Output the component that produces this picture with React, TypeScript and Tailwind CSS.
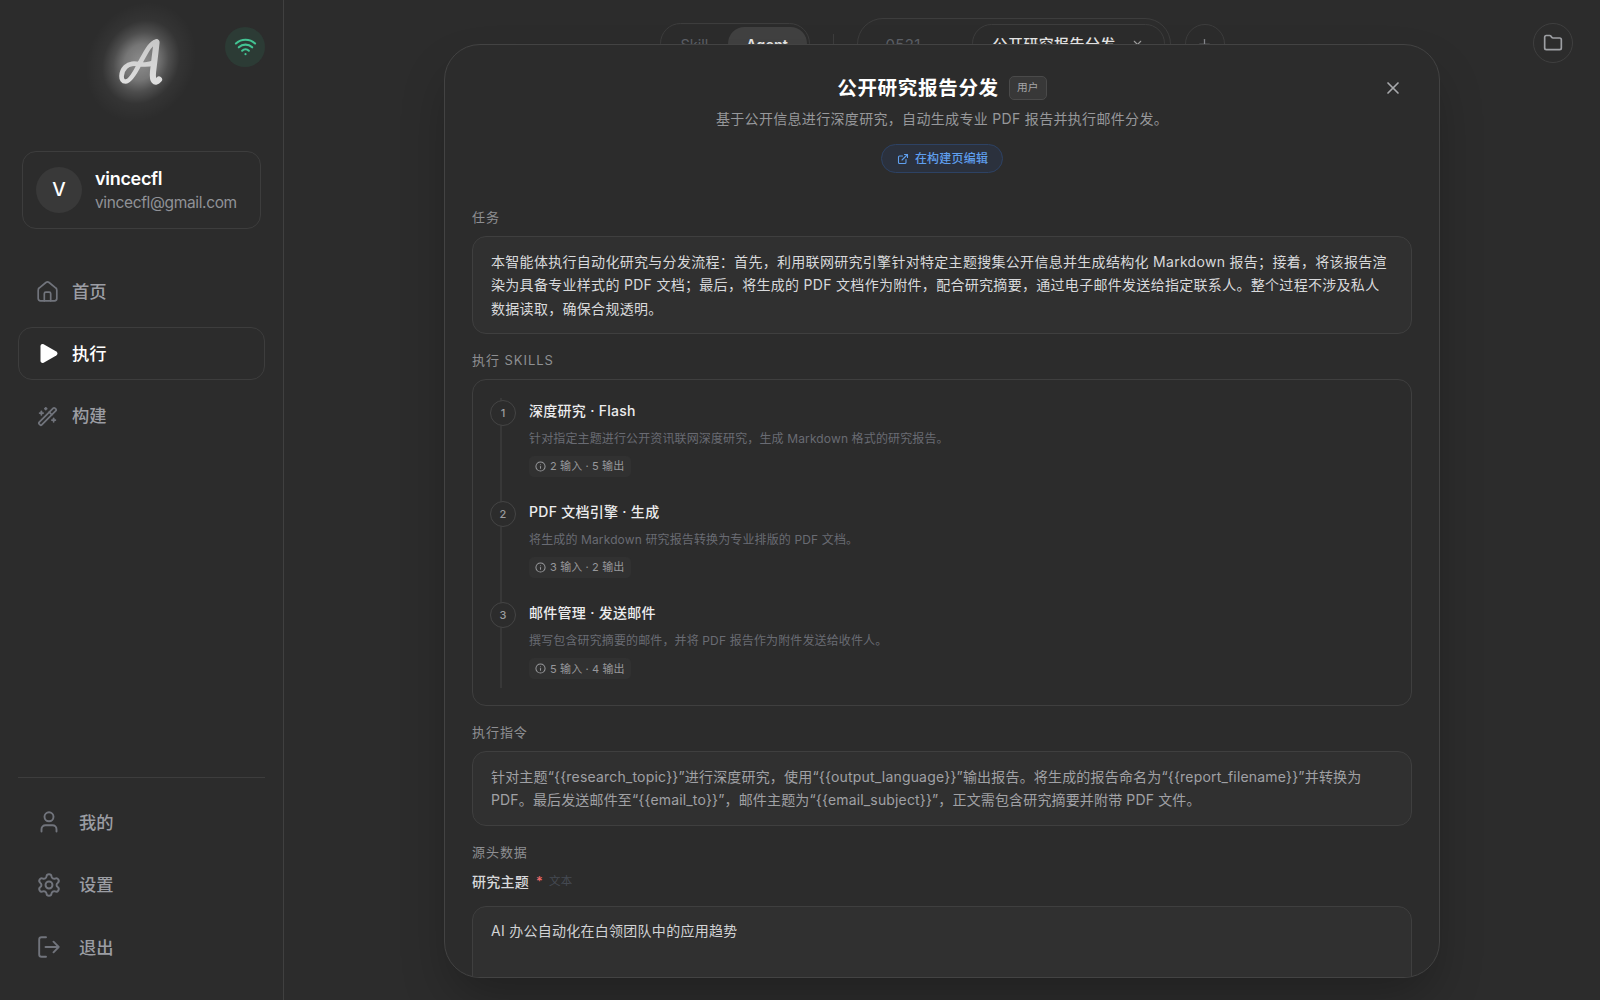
import type { ReactNode } from 'react'
import {
  ExternalLink,
  Folder,
  Info,
  Plus,
  WandSparkles,
  Wifi,
  X,
} from 'lucide-react'

const skills = [
  {
    title: '深度研究 · Flash',
    description: '针对指定主题进行公开资讯联网深度研究，生成 Markdown 格式的研究报告。',
    io: '2 输入 · 5 输出',
  },
  {
    title: 'PDF 文档引擎 · 生成',
    description: '将生成的 Markdown 研究报告转换为专业排版的 PDF 文档。',
    io: '3 输入 · 2 输出',
  },
  {
    title: '邮件管理 · 发送邮件',
    description: '撰写包含研究摘要的邮件，并将 PDF 报告作为附件发送给收件人。',
    io: '5 输入 · 4 输出',
  },
]

function Logo() {
  return (
    <svg
      viewBox="0 0 100 90"
      className="mr-1 h-[90px] w-[100px] overflow-visible"
      fill="none"
      strokeLinecap="round"
      strokeLinejoin="round"
    >
      <defs>
        <radialGradient id="glow">
          <stop offset="0" stopColor="#fff" stopOpacity="0.46" />
          <stop offset="0.3" stopColor="#fff" stopOpacity="0.35" />
          <stop offset="0.5" stopColor="#fff" stopOpacity="0.16" />
          <stop offset="0.7" stopColor="#fff" stopOpacity="0.04" />
          <stop offset="1" stopColor="#fff" stopOpacity="0" />
        </radialGradient>
        <linearGradient id="ink" x1="0" y1="0" x2="0" y2="1">
          <stop offset="0" stopColor="#c8c8c8" />
          <stop offset="1" stopColor="#dedede" />
        </linearGradient>
      </defs>
      <ellipse cx="51" cy="42" rx="53" ry="62" fill="url(#glow)" transform="rotate(30 51 42)" />
      <path
        d="M66.500 21.500C60 23 56 32 50 43C45 53 40 61.500 35.500 61.500C30 61.500 30.500 52 35.500 47C41 41.500 48 44.500 55 44.500C59 44.500 62 43.500 64.500 42.500"
        stroke="url(#ink)"
        strokeWidth="4.700"
      />
      <path
        d="M66.500 22.500C65.500 32 64 43 63 52C62.200 61 65 64 69 59.500"
        stroke="url(#ink)"
        strokeWidth="6.200"
      />
    </svg>
  )
}

function HomeIcon() {
  return (
    <svg viewBox="0 0 21 21" className="size-[21px]" fill="none" stroke="currentColor" strokeWidth="1.700" strokeLinecap="round" strokeLinejoin="round">
      <path d="M1.200 9.200C1.200 8.200 1.600 7.400 2.400 6.800L8.900 1.500C9.900.8 11.100.8 12.100 1.500L18.600 6.800C19.400 7.400 19.800 8.200 19.800 9.200V17.500C19.800 19 19 19.800 17.500 19.800H3.500C2 19.800 1.200 19 1.200 17.500Z" />
      <path d="M7.300 19.800V12.800C7.300 11.800 7.900 11.200 8.900 11.200H12.100C13.100 11.200 13.700 11.800 13.700 12.800V19.800" />
    </svg>
  )
}

function PlayIcon() {
  return (
    <svg viewBox="0 0 21 21" className="size-[21px]" fill="#fff">
      <path d="M2.500 3.200C2.500 1.400 4 .6 5.600 1.300L18.300 8.500C19.900 9.500 19.900 11.500 18.300 12.500L5.600 19.700C4 20.500 2.500 19.600 2.500 17.800Z" />
    </svg>
  )
}

function UserIcon() {
  return (
    <svg viewBox="0 0 22 22" className="-mt-0.5 size-[22px]" fill="none" stroke="currentColor" strokeWidth="1.900" strokeLinecap="round">
      <circle cx="11" cy="5.800" r="4.500" />
      <path d="M3.500 20.500V18.200C3.500 15.900 5.200 14.200 7.500 14.200H14.500C16.800 14.200 18.500 15.900 18.500 18.200V20.500" />
    </svg>
  )
}

function GearIcon() {
  return (
    <svg viewBox="0 0 24 24" className="size-[26px] shrink-0" fill="none" stroke="currentColor" strokeWidth="1.800" strokeLinejoin="round">
      <path d="M9.671 4.136a2.340 2.340 0 0 1 4.659 0 2.340 2.340 0 0 0 3.319 1.915 2.340 2.340 0 0 1 2.330 4.033 2.340 2.340 0 0 0 0 3.831 2.340 2.340 0 0 1-2.330 4.033 2.340 2.340 0 0 0-3.319 1.915 2.340 2.340 0 0 1-4.659 0 2.340 2.340 0 0 0-3.320-1.915 2.340 2.340 0 0 1-2.330-4.033 2.340 2.340 0 0 0 0-3.831A2.340 2.340 0 0 1 6.350 6.051a2.340 2.340 0 0 0 3.319-1.915" />
      <circle cx="12" cy="12" r="3.200" />
    </svg>
  )
}

function LogoutIcon() {
  return (
    <svg viewBox="0 0 22 22" className="-mt-0.5 size-[22px]" fill="none" stroke="currentColor" strokeWidth="1.900" strokeLinecap="round" strokeLinejoin="round">
      <path d="M8 1.200H3.500C2 1.200 1.200 2 1.200 3.500V18.500C1.200 20 2 20.800 3.500 20.800H8" />
      <path d="M7.500 11H20.700M15.500 5.700L20.700 11L15.500 16.300" />
    </svg>
  )
}

function NavItem({ icon, label, active }: { icon: ReactNode; label: string; active?: boolean }) {
  return (
    <a
      className={
        active
          ? 'flex h-[53px] items-center gap-[14px] rounded-[14px] border border-[#3d3d3d] pl-[18px] text-white'
          : 'flex h-[53px] items-center gap-[14px] rounded-[14px] border border-transparent pl-[18px] text-[#71747c]'
      }
    >
      {icon}
      <span className={active ? 'text-[17.300px] font-medium' : 'text-[17.300px] font-medium text-[#9b9da3]'}>{label}</span>
    </a>
  )
}

function FooterItem({ icon, label }: { icon: ReactNode; label: string }) {
  return (
    <a className="flex h-[53px] items-center gap-[19px] pl-[19px] text-[#71747c]">
      <span className="flex w-[23px] justify-center">{icon}</span>
      <span className="text-[17.300px] font-medium text-[#9b9da3]">{label}</span>
    </a>
  )
}

function Sidebar() {
  return (
    <aside className="flex h-full w-[284px] shrink-0 flex-col border-r border-[#404040] px-[18px]">
      <div className="relative flex h-[151px] justify-center pt-5">
        <Logo />
        <div className="absolute top-[27px] right-0 flex size-10 items-center justify-center rounded-full bg-[#2c3b35]">
          <Wifi className="-mt-0.5 size-[23px] text-[#43c493]" strokeWidth={2.2} />
        </div>
      </div>

      <div className="mx-1 flex h-[78px] items-center rounded-[14px] border border-[#3d3d3d] pl-[13px]">
        <div className="flex size-[46px] items-center justify-center rounded-full bg-[#393939] text-[19px] font-medium text-white">
          V
        </div>
        <div className="ml-[13px] pt-[2px] leading-6">
          <p className="text-[18px] font-semibold tracking-[-0.300px] text-white">vincecfl</p>
          <p className="text-[15.500px] tracking-[-0.360px] text-[#909297]">vincecfl@gmail.com</p>
        </div>
      </div>

      <nav className="mt-[36px] flex flex-col gap-[9.300px]">
        <NavItem icon={<HomeIcon />} label="首页" />
        <NavItem icon={<span className="w-[21px] pl-px"><PlayIcon /></span>} label="执行" active />
        <NavItem icon={<WandSparkles className="size-[21px]" strokeWidth={2} />} label="构建" />
      </nav>

      <div className="mt-auto mb-[26px] flex flex-col gap-[9.300px] border-t border-[#3d3d3d] pt-[18px]">
        <FooterItem icon={<UserIcon />} label="我的" />
        <FooterItem icon={<GearIcon />} label="设置" />
        <FooterItem icon={<LogoutIcon />} label="退出" />
      </div>
    </aside>
  )
}

function TopBar() {
  return (
    <header className="grid h-[87px] grid-cols-[1fr_auto_1fr] items-center">
      <div />
      <div className="flex items-center">
        <div className="flex h-[41px] w-[150px] items-center rounded-full border border-[#3d3d3d] pr-[2px] text-[14.500px]">
          <span className="flex-1 pt-0.5 pl-[20px] text-[#5d6067]">Skill</span>
          <span className="flex h-[33px] w-[79px] items-center justify-center rounded-full bg-[#414141] pt-0.5 font-semibold text-[#e6e6e6]">
            Agent
          </span>
        </div>
        <div className="mx-[23px] h-5 w-px bg-[#3d3d3d]" />
        <div className="flex h-[52px] w-[314px] items-center justify-between rounded-full border border-[#3d3d3d] pr-[5px] pl-7 text-[15px]">
          <span className="pt-1 tracking-[0.300px] text-[#5d6067]">0521</span>
          <span className="flex h-[39px] w-[193px] items-center justify-between rounded-full border border-[#3d3d3d] pr-[20px] pl-5 font-medium text-[#e6e6e6]">
            <span className="pt-[3px] tracking-[0.400px]">公开研究报告分发</span>
            <X className="mt-0.5 size-[13px] text-[#a0a0a0]" strokeWidth={2} />
          </span>
        </div>
        <div className="ml-[14px] flex size-[40px] items-center justify-center rounded-full border border-[#3d3d3d]">
          <Plus className="mt-0.5 size-[17px] text-[#85878c]" strokeWidth={1.8} />
        </div>
      </div>
      <div className="mr-[27px] flex size-10 -mt-px items-center justify-center justify-self-end rounded-full border border-[#3f3f3f]">
        <Folder className="size-5 text-[#9d9fa3]" strokeWidth={2} />
      </div>
    </header>
  )
}

function Section({ title, children }: { title: string; children: ReactNode }) {
  return (
    <section>
      <h3 className="-mt-px mb-[9px] text-[13px] leading-5 tracking-[0.950px] text-[#8e8f92]">{title}</h3>
      {children}
    </section>
  )
}

function AgentDialog() {
  return (
    <div className="relative flex h-[934px] w-[996px] flex-col overflow-hidden rounded-[36px] border border-[#434343] bg-[#2c2c2c] px-[27px] pt-[29px] shadow-[0_25px_50px_-8px_rgba(0,0,0,0.280)]">
      <X className="absolute top-[33px] right-[36px] size-5 text-[#a8a9ac]" strokeWidth={2} />
      <div className="flex shrink-0 flex-col items-center">
        <div className="flex h-7 items-center gap-[10px]">
          <h2 className="pt-0.5 text-[19.500px] font-bold tracking-[0.700px] text-white">公开研究报告分发</h2>
          <span className="flex h-6 w-[38px] items-center justify-center rounded-[5px] border border-[#4a4a4a] bg-[#383838] text-[10.700px] text-[#a5a6a8]">
            用户
          </span>
        </div>
        <p className="mt-[6px] text-[14px] leading-[22px] tracking-[0.320px] text-[#97989b]">
          基于公开信息进行深度研究，自动生成专业 PDF 报告并执行邮件分发。
        </p>
        <button className="mt-[14px] flex h-[29px] w-[122px] items-center justify-center gap-[6px] rounded-full border border-[#2d4264] bg-[#2b313d] pt-px pl-px text-[12px] font-medium tracking-[0.200px] text-[#5f9fee]">
          <ExternalLink className="size-3" strokeWidth={2.2} />
          在构建页编辑
        </button>
      </div>

      <div className="mt-[35px] flex w-[940px] shrink-0 flex-col gap-[17px]">
        <Section title="任务">
          <div className="h-[98px] rounded-[14px] border border-[#3f3f3f] bg-[#303030] px-[18px] pt-[13px] text-[14px] leading-[23.300px] tracking-[0.300px] whitespace-nowrap text-[#d8d9db]">
            <p>本智能体执行自动化研究与分发流程：首先，利用联网研究引擎针对特定主题搜集公开信息并生成结构化 Markdown 报告；接着，将该报告渲</p>
            <p>染为具备专业样式的 PDF 文档；最后，将生成的 PDF 文档作为附件，配合研究摘要，通过电子邮件发送给指定联系人。整个过程不涉及私人</p>
            <p>数据读取，确保合规透明。</p>
          </div>
        </Section>

        <Section title="执行 SKILLS">
          <ol className="relative h-[327px] rounded-[14px] border border-[#3f3f3f] px-[17px] pt-5">
            <li className="absolute top-[18px] left-[27px] h-[290px] w-[2px] bg-[#383838]" />
            {skills.map((skill, i) => (
              <li key={skill.title} className="relative flex h-[101.200px] gap-[13px]">
                <span className="flex size-[26px] shrink-0 items-center justify-center rounded-full border border-[#454545] bg-[#2c2c2c] text-[11px] font-medium text-[#9b9c9f]">
                  {i + 1}
                </span>
                <div className="pt-px">
                  <h4 className="text-[14px] leading-5 font-medium tracking-[0.280px] text-[#ececee]">{skill.title}</h4>
                  <p className="mt-2 text-[12px] leading-5 tracking-[0.130px] text-[#696b73]">{skill.description}</p>
                  <span className="mt-[7px] inline-flex h-[21px] w-[102px] items-center gap-[4px] rounded-[5px] bg-[#313131] pl-[6px] text-[11px] tracking-[0.120px] whitespace-nowrap text-[#97989b]">
                    <Info className="size-[11px] shrink-0" strokeWidth={2.2} />
                    {skill.io}
                  </span>
                </div>
              </li>
            ))}
          </ol>
        </Section>

        <Section title="执行指令">
          <div className="h-[75px] rounded-[14px] border border-[#3f3f3f] bg-[#303030] px-[18px] pt-[13px] text-[14px] leading-[23.300px] tracking-[0.180px] whitespace-nowrap text-[#a0a1a5]">
            <p>{'针对主题“{{research_topic}}”进行深度研究，使用“{{output_language}}”输出报告。将生成的报告命名为“{{report_filename}}”并转换为'}</p>
            <p className="tracking-[0.150px]">{'PDF。最后发送邮件至“{{email_to}}”，邮件主题为“{{email_subject}}”，正文需包含研究摘要并附带 PDF 文件。'}</p>
          </div>
        </Section>

        <Section title="源头数据">
          <div className="flex h-[21px] items-center text-[14px] font-medium tracking-[0.250px] text-[#d8d9db]">
            研究主题
            <span className="ml-[7px] text-[13px] text-[#ee6b6b]">*</span>
            <span className="ml-[6px] pt-px text-[11.500px] font-normal text-[#454a53]">文本</span>
          </div>
          <div className="mt-[14px] h-[110px] rounded-[14px] border border-[#3f3f3f] bg-[#303030] px-[18px] pt-3 text-[14px] leading-[23.300px] tracking-[0.270px] text-[#d2d3d5]">
            AI 办公自动化在白领团队中的应用趋势
          </div>
        </Section>
      </div>
    </div>
  )
}

export default function App() {
  return (
    <div className="flex h-[1000px] w-[1600px] overflow-hidden bg-[#2c2c2c] font-['Inter','Noto_Sans_CJK_SC',sans-serif]">
      <Sidebar />
      <main className="relative min-w-0 flex-1">
        <TopBar />
        <div className="absolute inset-0 flex justify-center pt-11">
          <AgentDialog />
        </div>
      </main>
    </div>
  )
}
